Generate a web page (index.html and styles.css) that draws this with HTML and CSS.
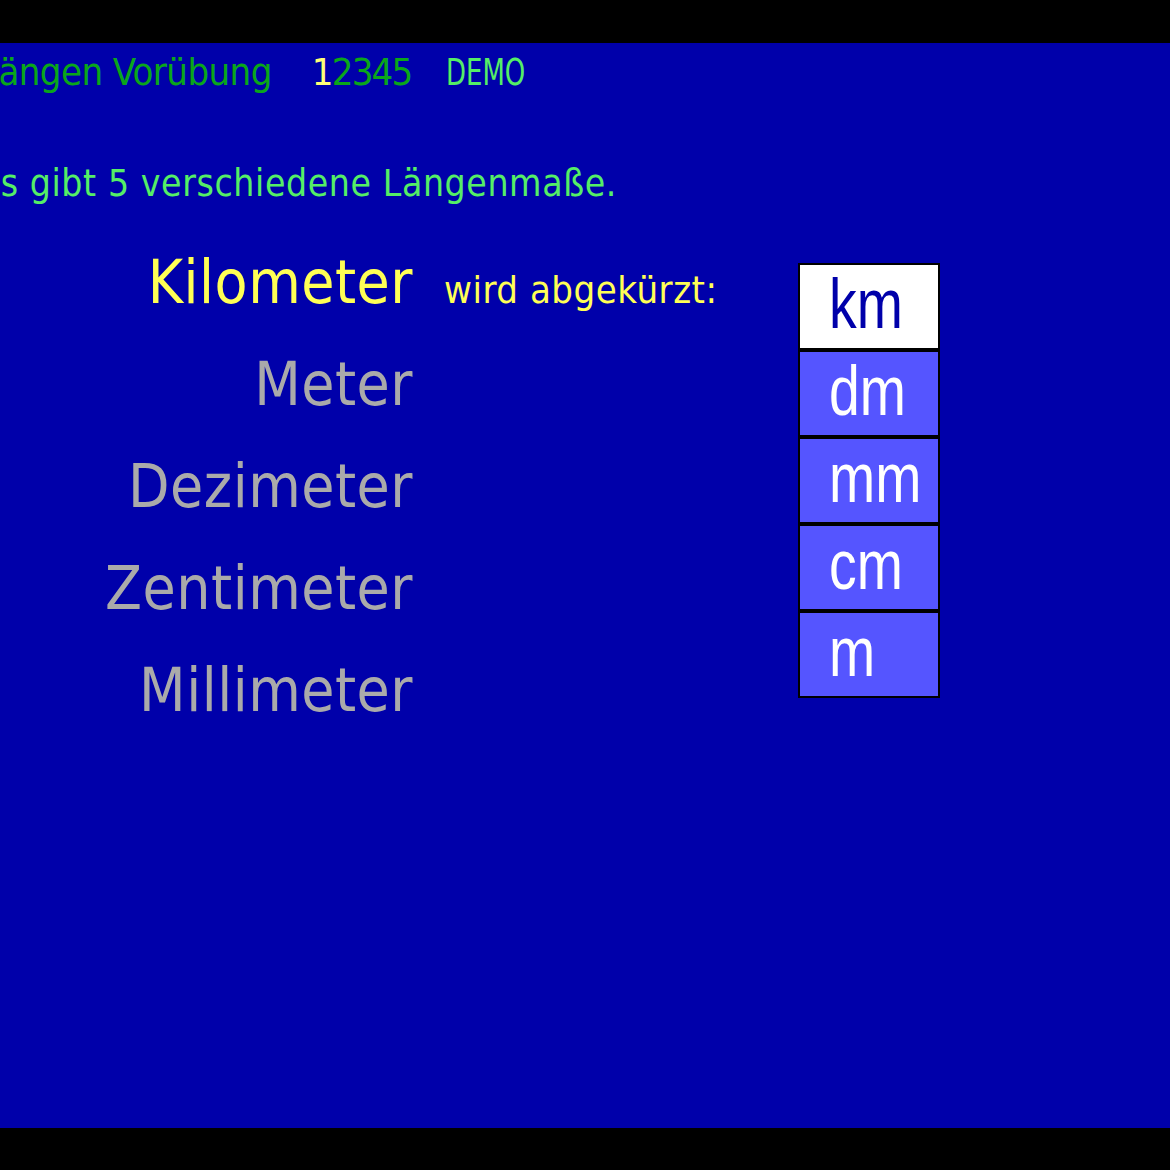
FILE: index.html
```html
<!DOCTYPE html>
<html lang="de">
<head>
<meta charset="utf-8">
<title>Längen Vorübung</title>
<link rel="stylesheet" href="styles.css">
</head>
<body>
<div class="screen">
  <div class="header">
    <span class="title">Längen Vorübung</span>
    <span class="code"><span class="first">1</span>2345</span>
    <span class="demo">DEMO</span>
  </div>
  <div class="intro">Es gibt 5 verschiedene Längenmaße.</div>
  <div class="main">
    <div class="labels">
      <div class="row"><span class="word active">Kilometer</span><span class="note">wird abgekürzt:</span></div>
      <div class="row"><span class="word">Meter</span></div>
      <div class="row"><span class="word">Dezimeter</span></div>
      <div class="row"><span class="word">Zentimeter</span></div>
      <div class="row"><span class="word">Millimeter</span></div>
    </div>
    <div class="boxes">
      <div class="box selected"><span class="abbr">km</span></div>
      <div class="box"><span class="abbr">dm</span></div>
      <div class="box"><span class="abbr">mm</span></div>
      <div class="box"><span class="abbr">cm</span></div>
      <div class="box"><span class="abbr">m</span></div>
    </div>
  </div>
</div>
</body>
</html>
```

FILE: styles.css
```css
html, body {
  margin: 0;
  padding: 0;
  background: #000000;
  overflow: hidden;
}

body {
  width: 1170px;
  height: 1170px;
  font-family: "DejaVu Sans Condensed", "DejaVu Sans", sans-serif;
  font-stretch: condensed;
}

.screen {
  margin-top: 43px;
  height: 1085px;
  background: #0000aa;
  overflow: hidden;
}

.header {
  display: flex;
  align-items: baseline;
  margin-left: -20px;
  padding-top: 5px;
  height: 48px;
  font-size: 38px;
  line-height: 48px;
  white-space: nowrap;
}

.title {
  color: #0aa61a;
  letter-spacing: -0.6px;
}

.code {
  margin-left: 40px;
  color: #0aa61a;
  letter-spacing: -1.8px;
}

.code .first {
  color: #ffff77;
}

.demo {
  display: inline-block;
  margin-left: 34px;
  color: #55ee66;
  transform: scaleX(0.76);
  transform-origin: left center;
}

.intro {
  margin-top: 64px;
  margin-left: -21px;
  height: 48px;
  font-size: 37px;
  line-height: 48px;
  letter-spacing: 0.6px;
  color: #55ee66;
  white-space: nowrap;
}

.main {
  display: flex;
  align-items: flex-start;
  margin-top: 23px;
}

.labels {
  width: 798px;
  display: flex;
  flex-direction: column;
}

.row {
  display: flex;
  align-items: baseline;
  height: 102px;
  line-height: 102px;
  white-space: nowrap;
}

.word {
  width: 413px;
  text-align: right;
  font-size: 60px;
  letter-spacing: 0.5px;
  color: #aaaaaa;
}

.word.active {
  color: #ffff55;
}

.note {
  margin-left: 31px;
  font-size: 38px;
  letter-spacing: 0.5px;
  color: #ffff55;
}

.boxes {
  margin-top: 32px;
  display: flex;
  flex-direction: column;
}

.box {
  box-sizing: border-box;
  width: 142px;
  height: 87px;
  border: 2px solid #000000;
  background: #5555ff;
  color: #ffffff;
  padding-left: 29px;
  font-family: "Liberation Sans", Arial, sans-serif;
  font-size: 71px;
  line-height: 77px;
  overflow: hidden;
}

.box.selected {
  background: #ffffff;
  color: #0000aa;
}

.abbr {
  display: inline-block;
  transform: scaleX(0.78);
  transform-origin: left center;
}
```
